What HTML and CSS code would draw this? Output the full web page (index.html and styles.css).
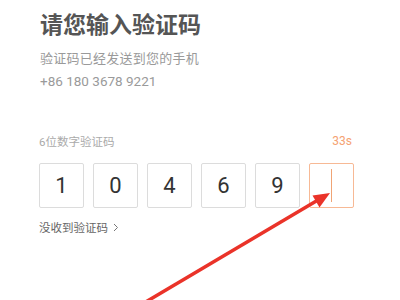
FILE: index.html
```html
<!DOCTYPE html>
<html lang="zh">
<head>
<meta charset="utf-8">
<link rel="stylesheet" href="styles.css">
</head>
<body>
<main class="page">
  <h1 class="title">请您输入验证码</h1>
  <p class="sub">验证码已经发送到您的手机</p>
  <p class="phone">+86 180 3678 9221</p>
  <div class="code">
    <div class="code-head">
      <span class="label">6位数字验证码</span>
      <span class="timer">33s</span>
    </div>
    <div class="boxes">
      <div class="box">1</div>
      <div class="box">0</div>
      <div class="box">4</div>
      <div class="box">6</div>
      <div class="box">9</div>
      <div class="box active"><span class="cursor"></span></div>
    </div>
    <a class="resend">没收到验证码<svg class="chev" width="6" height="9" viewBox="0 0 6 9"><path d="M1 1 L4.5 4.5 L1 8" fill="none" stroke="#777" stroke-width="1"/></svg></a>
  </div>
</main>
<svg class="arrow" width="400" height="300" viewBox="0 0 400 300">
  <line x1="144" y1="303" x2="318" y2="200" stroke="#ea3329" stroke-width="3.5"/>
  <polygon points="330,193 312.5,195.5 319.5,207.5" fill="#ea3329"/>
</svg>
</body>
</html>
```
FILE: styles.css
```css
html, body {
  margin: 0;
  padding: 0;
  background: #fff;
}
body {
  width: 400px;
  height: 300px;
  overflow: hidden;
  position: relative;
  font-family: "Roboto", "Noto Sans CJK SC", sans-serif;
}
.page {
  padding: 8px 0 0 39px;
  width: 315px;
}
.title {
  margin: 0 0 0 1px;
  font-size: 23px;
  line-height: 30px;
  font-weight: 700;
  color: #555;
  font-family: "Noto Sans CJK SC", sans-serif;
}
.sub {
  margin: 10px 0 0 1px;
  font-size: 13px;
  line-height: 20px;
  letter-spacing: 0.25px;
  color: #9a9a9a;
  font-family: "Noto Sans CJK SC", sans-serif;
}
.phone {
  margin: 3px 0 0 1px;
  font-size: 13.5px;
  line-height: 20px;
  color: #9a9a9a;
}
.code {
  margin-top: 42px;
}
.code-head {
  display: flex;
  justify-content: space-between;
  align-items: center;
  height: 16px;
}
.label {
  font-size: 11.5px;
  color: #aaa;
  font-family: "Roboto", "Noto Sans CJK SC", sans-serif;
}
.timer {
  font-size: 12px;
  color: #f5a272;
  padding-right: 2px;
}
.boxes {
  margin-top: 14px;
  display: flex;
  gap: 9px;
}
.box {
  box-sizing: border-box;
  width: 45px;
  height: 45px;
  border: 1px solid #dcdcdc;
  border-radius: 2px;
  display: flex;
  align-items: center;
  justify-content: center;
  font-size: 22px;
  color: #333;
}
.box.active {
  border-color: #f7b995;
}
.cursor {
  width: 1px;
  height: 33px;
  background: #f0a475;
}
.resend {
  display: flex;
  align-items: center;
  margin-top: 11px;
  font-size: 11.5px;
  line-height: 16px;
  color: #666;
  font-family: "Noto Sans CJK SC", sans-serif;
}
.chev {
  margin-left: 5px;
}
.arrow {
  position: absolute;
  left: 0;
  top: 0;
  pointer-events: none;
}
```
